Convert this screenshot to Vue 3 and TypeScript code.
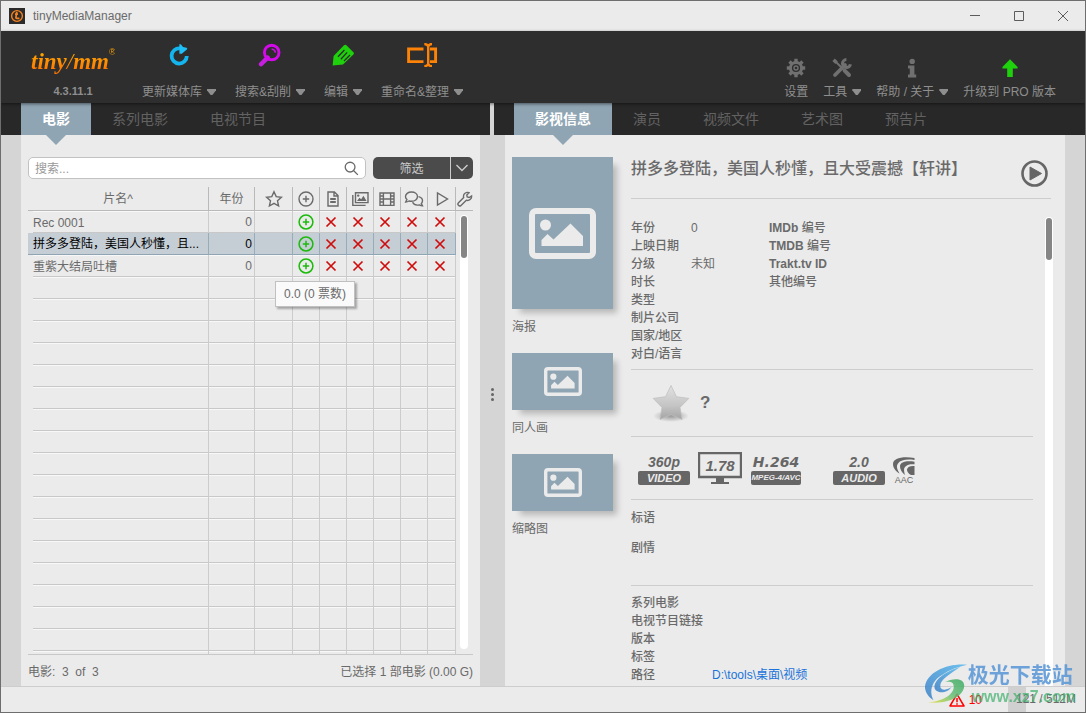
<script setup lang="ts">
import { ref } from 'vue'

interface Movie {
  title: string
  year: number
}

const movies: Movie[] = [
  { title: 'Rec 0001', year: 0 },
  { title: '拼多多登陆，美国人秒懂，且大受震撼【轩讲】', year: 0 },
  { title: '重紫大结局吐槽', year: 0 },
]
const selected = ref(1)
const query = ref('')
const emptyRows = 18
const flags = ['nfo', 'images', 'trailer', 'subtitles', 'watched']

const shorten = (title: string): string => (title.length > 14 ? title.slice(0, 13) + '...' : title)

const movieTabs = ['电影', '系列电影', '电视节目']
const detailTabs = ['影视信息', '演员', '视频文件', '艺术图', '预告片']
const movieTab = ref(0)
const detailTab = ref(0)

const artwork = [
  { label: '海报', kind: 'tall' },
  { label: '同人画', kind: 'wide' },
  { label: '缩略图', kind: 'wide' },
]

const facts = [
  { label: '年份', value: '0', latin: 'IMDb', id: ' 编号' },
  { label: '上映日期', value: '', latin: 'TMDB', id: ' 编号' },
  { label: '分级', value: '未知', latin: 'Trakt.tv ID', id: '' },
  { label: '时长', value: '', latin: '', id: '其他编号' },
  { label: '类型', value: '', latin: '', id: '' },
  { label: '制片公司', value: '', latin: '', id: '' },
  { label: '国家/地区', value: '', latin: '', id: '' },
  { label: '对白/语言', value: '', latin: '', id: '' },
]
const extras = ['系列电影', '电视节目链接', '版本', '标签']
</script>

<template>
  <div class="window">
    <header class="titlebar">
      <svg class="app-icon" viewBox="0 0 16 16">
        <rect width="16" height="16" fill="#2b2b2b" />
        <circle cx="8" cy="8" r="5.4" fill="none" stroke="#f5821f" stroke-width="1.4" />
        <path d="M7.8 3.8 6.900 9.600q0 .8.900.8h2.600M6 6.200h3" fill="none" stroke="#f5821f" stroke-width="1.700" />
      </svg>
      <span class="app-name">tinyMediaManager</span>
      <div class="window-buttons">
        <button aria-label="最小化"><svg viewBox="0 0 12 12"><path d="M1 5.5h10" /></svg></button>
        <button aria-label="最大化"><svg viewBox="0 0 12 12"><path d="M1.5 1.5h9v9h-9z" /></svg></button>
        <button aria-label="关闭"><svg viewBox="0 0 12 12"><path d="m1 1 10 10M11 1 1 11" /></svg></button>
      </div>
    </header>

    <div class="toolbar">
      <div class="brand">
        <div class="logo">tiny<i>/</i>mm<sup>®</sup></div>
        <div class="version">4.3.11.1</div>
      </div>
      <button class="tool">
        <svg class="icon24" viewBox="0 0 24 24">
          <path d="M19.8 13a7.600 7.600 0 1 1-6.800-7.600" fill="none" stroke="#14b4ee" stroke-width="3.800" />
          <path d="M12.400 1v9.800h2.400l5.600-4.800-.8-1.200-3.600-.8L14 1.400z" fill="#1fc0f8" />
        </svg>
        <span>更新媒体库<b class="caret"></b></span>
      </button>
      <button class="tool">
        <svg class="icon24" viewBox="0 0 24 24">
          <path d="M9.6 14.6 3 21.2" stroke="#c61fe0" stroke-width="4.4" stroke-linecap="round" />
          <circle cx="13.7" cy="9.5" r="7.3" fill="none" stroke="#d50aec" stroke-width="2.9" />
          <path d="M13.6 5.9q3.2.3 3.8 3.8" fill="none" stroke="#d50aec" stroke-width="1.5" />
        </svg>
        <span>搜索&amp;刮削<b class="caret"></b></span>
      </button>
      <button class="tool">
        <svg class="icon24" viewBox="0 0 24 24">
          <path d="M1.6 22.6 2.6 13 13 2.2q1.2-1 2.4 0l7 7q1 1.2 0 2.4L12 21.4z" fill="#1fd00c" />
          <path d="m13.400 7-6.400 6.800M16.200 9.400l-6.400 6.800M19 12l-6 6" fill="none" stroke="#2e2e2e" stroke-width="1.300" />
        </svg>
        <span>编辑<b class="caret"></b></span>
      </button>
      <button class="tool">
        <svg class="rename-icon" viewBox="0 0 32 24">
          <path d="M17.500 6H2.600v12.600h14.900M24 6h5.600v12.600H24" fill="none" stroke="#fd8208" stroke-width="2.900" />
          <path d="M18.300 1q3 0 3.900 2.400Q23.100 1 26 1M22.200 3v18M18.300 23.200q3 0 3.900-2.400.9 2.400 3.800 2.400" fill="none" stroke="#fd8208" stroke-width="2.400" />
        </svg>
        <span>重命名&amp;整理<b class="caret"></b></span>
      </button>

      <div class="toolbar-right">
        <button class="tool">
          <svg class="icon20" viewBox="0 0 20 20">
            <circle cx="10" cy="10" r="5.600" fill="none" stroke="#707070" stroke-width="3" />
            <path d="M10 .8v3.400M10 15.800v3.400M.8 10h3.400M15.800 10h3.400M3.500 3.500l2.400 2.400M14.100 14.100l2.400 2.400M16.500 3.500l-2.400 2.400M5.900 14.100l-2.400 2.400" stroke="#707070" stroke-width="3.400" />
            <circle cx="10" cy="10" r="2" fill="none" stroke="#707070" stroke-width="1.400" />
          </svg>
          <span>设置</span>
        </button>
        <button class="tool">
          <svg class="icon20" viewBox="0 0 20 20" fill="none" stroke="#707070">
            <path d="M3 17 13 7" stroke-width="3.800" stroke-linecap="round" />
            <path d="M14.400 1.600a4 4 0 1 0 4 4.600" stroke-width="3" />
            <path d="m3 3 8 8" stroke-width="2" />
            <path d="M1.600 1.800 4.600 4.800" stroke-width="3.400" />
            <path d="m12.600 12.600 4.400 4.400" stroke-width="4" stroke-linecap="round" />
          </svg>
          <span>工具<b class="caret"></b></span>
        </button>
        <button class="tool">
          <svg class="icon20" viewBox="0 0 20 20" fill="#707070">
            <circle cx="10.200" cy="3.400" r="2.700" />
            <path d="M6 7.600h6.400v9h1.800V19.400H6v-2.800h1.800v-6.200H6z" />
          </svg>
          <span>帮助 / 关于<b class="caret"></b></span>
        </button>
        <button class="tool">
          <svg class="icon20" viewBox="0 0 20 20"><path d="M10 1.200 17.600 9v1.400h-4.800V19H7.200v-8.600H2.400V9z" fill="#1fd00c" /></svg>
          <span>升级到 PRO 版本</span>
        </button>
      </div>
    </div>

    <main class="body">
      <section class="side side-left">
        <nav class="tabs">
          <button v-for="(tab, i) in movieTabs" :key="tab" :class="{ active: i === movieTab }" @click="movieTab = i">{{ tab }}</button>
        </nav>
        <div class="panel list-panel">
          <div class="filter-bar">
            <label class="search">
              <input v-model="query" type="text" placeholder="搜索..." aria-label="搜索" />
              <svg viewBox="0 0 16 16"><circle cx="6.500" cy="6.500" r="5.200" /><path d="m10.400 10.400 4.400 4.400" /></svg>
            </label>
            <div class="filter">
              <button class="filter-main">筛选</button>
              <button class="filter-more" aria-label="筛选选项"><svg viewBox="0 0 14 10"><path d="m1.500 2 5.500 5.500L12.500 2" /></svg></button>
            </div>
          </div>

          <div class="table-wrap">
            <table>
              <colgroup>
                <col /><col class="c-year" /><col class="c-star" />
                <col v-for="n in 5" :key="n" class="c-flag" />
                <col class="c-last" /><col class="c-tool" />
              </colgroup>
              <thead>
                <tr>
                  <th>片名^</th>
                  <th>年份</th>
                  <th><svg viewBox="0 0 18 18"><path d="m9 1.800 2.200 4.800 5.200.6-3.900 3.600 1.100 5.200L9 13.400 4.400 16l1.100-5.200L1.600 7.200l5.200-.6z" /></svg></th>
                  <th><svg viewBox="0 0 18 18"><circle cx="9" cy="9" r="7" /><path d="M9 5.800v6.400M5.800 9h6.400" /></svg></th>
                  <th><svg viewBox="0 0 18 18"><path d="M4 2h6.400L14 5.600V16H4zM10 2v4h4" /><path d="M6.200 9h5.600M6.200 12h5.600" stroke-width="2" /></svg></th>
                  <th><svg viewBox="0 0 18 18"><path d="M4.500 2.800H17v9.800H4.500z" /><path d="M1.800 5v10.400h12.800" /><path d="m6 11 2.400-3.200 1.800 1.400 2.200-3.400 3.200 5.200z" fill="#6a6a6a" stroke="none" /><circle cx="7.200" cy="5.600" r="1.200" fill="#6a6a6a" stroke="none" /></svg></th>
                  <th><svg viewBox="0 0 18 18"><path d="M2 3h14v12.400H2zM5.400 3v12.400M12.600 3v12.400M5.400 9h7.200M2 6h3.400M2 9h3.400M2 12h3.400M12.600 6H16M12.600 9H16M12.600 12H16" /></svg></th>
                  <th><svg class="talk" viewBox="0 0 20 18"><path d="M7.500 2C4 2 1.500 4 1.500 6.600c0 1.200.5 2.200 1.400 3L1.700 12c1.500 0 2.500-.5 3.300-1 .8.200 1.600.3 2.500.3 3.300 0 6-2 6-4.700S10.800 2 7.500 2z" /><path d="M14.500 6.600c2.500.5 4 2.200 4 4.200 0 1.100-.5 2-1.200 2.800l1.200 2.300c-1.400 0-2.400-.5-3.200-1-3 .6-5.600-.4-6.700-2.600" /></svg></th>
                  <th><svg viewBox="0 0 18 18"><path d="M4.500 3v12L14.500 9z" /></svg></th>
                  <th class="tool-head"><svg viewBox="0 0 16 16"><path d="M10 1.400a4 4 0 0 0-3.300 5.200L1.500 11.800a1.700 1.700 0 0 0 2.500 2.600L9.300 9.200A4 4 0 0 0 14.600 5l-2.400 1.500-2-.5-.4-2 2.200-2.300a4 4 0 0 0-2-.3z" /></svg></th>
                </tr>
              </thead>
              <tbody>
                <tr v-for="(m, i) in movies" :key="m.title" :class="{ selected: i === selected }" @click="selected = i">
                  <td class="name">{{ shorten(m.title) }}</td>
                  <td class="year">{{ m.year }}</td>
                  <td></td>
                  <td class="mark"><svg class="plus" viewBox="0 0 16 16"><circle cx="8" cy="8" r="6.900" /><path d="M8 4.800v6.400M4.800 8h6.400" /></svg></td>
                  <td v-for="f in flags" :key="f" class="mark missing"><svg class="cross" viewBox="0 0 12 12"><path d="m1.500 1.500 9 9M10.500 1.500l-9 9" /></svg></td>
                  <td class="tail"></td>
                </tr>
                <tr v-for="n in emptyRows" :key="'e' + n">
                  <td class="name"></td>
                  <td v-for="c in 8" :key="c"></td>
                  <td class="tail"></td>
                </tr>
              </tbody>
            </table>
            <div class="scrollbar"><div class="thumb"></div></div>
            <div class="tooltip">0.0 (0 票数)</div>
          </div>

          <footer class="summary">
            <span>电影:&nbsp; 3&nbsp; of&nbsp; 3</span>
            <span>已选择 1 部电影 (0.00 G)</span>
          </footer>
        </div>
      </section>

      <div class="splitter"><i></i><i></i><i></i></div>

      <section class="side side-right">
        <nav class="tabs">
          <button v-for="(tab, i) in detailTabs" :key="tab" :class="{ active: i === detailTab }" @click="detailTab = i">{{ tab }}</button>
        </nav>
        <div class="panel detail-panel">
          <div class="artwork">
            <figure v-for="a in artwork" :key="a.label" :class="a.kind">
              <div class="art">
                <svg viewBox="0 0 67 51">
                  <rect x="3" y="3" width="61" height="45" rx="4" fill="none" stroke="#ebebeb" stroke-width="6" />
                  <circle cx="16.500" cy="17" r="5.500" fill="#ebebeb" />
                  <path d="M12.500 38v-6l6-6 6 5.500L41.500 15.500 54 28v10z" fill="#ebebeb" />
                </svg>
              </div>
              <figcaption>{{ a.label }}</figcaption>
            </figure>
          </div>

          <div class="details">
            <div class="detail-head">
              <h1>拼多多登陆，美国人秒懂，且大受震撼【轩讲】</h1>
              <button class="play" aria-label="播放"><svg viewBox="0 0 27 27"><circle cx="13.500" cy="13.500" r="12" fill="none" stroke="#666" stroke-width="2.600" /><path d="M9 7v13l11.500-6.500z" fill="#666" stroke="#666" stroke-linejoin="round" /></svg></button>
            </div>
            <div class="scroll-area">
              <div class="sections">
                <dl class="facts">
                  <div v-for="f in facts" :key="f.label">
                    <dt>{{ f.label }}</dt>
                    <dd>{{ f.value }}</dd>
                    <dt><b>{{ f.latin }}</b>{{ f.id }}</dt>
                  </div>
                </dl>
                <div class="rating">
                  <svg viewBox="0 0 38 38">
                    <defs>
                      <linearGradient id="star" x1="0" y1="0" x2="0" y2="1"><stop offset="0" stop-color="#e2e2e2" /><stop offset=".6" stop-color="#c4c4c4" /><stop offset="1" stop-color="#a4a4a4" /></linearGradient>
                      <radialGradient id="ground"><stop offset="0" stop-color="#999" /><stop offset="1" stop-color="#999" stop-opacity="0" /></radialGradient>
                    </defs>
                    <ellipse cx="19" cy="32" rx="18" ry="6" fill="url(#ground)" />
                    <path d="m19 1.500 5.400 11.200 12.400 1.700-8.800 9 2 12L19 30.500 8 35.400l2-12-8.800-9 12.400-1.700z" fill="url(#star)" stroke="#bcbcbc" stroke-width=".7" stroke-linejoin="round" />
                  </svg>
                  <strong>?</strong>
                </div>
                <div class="badges">
                  <div class="badge"><em>360p</em><span>VIDEO</span></div>
                  <div class="monitor">
                    <em>1.78</em>
                    <svg viewBox="0 0 44 32"><path d="M1 1h42v24H1z" fill="none" stroke="#666" stroke-width="2.400" /><path d="M18 25h8v5h5v2H13v-2h5z" fill="#666" /></svg>
                  </div>
                  <div class="badge codec"><em>H.264</em><span>MPEG-4/AVC</span></div>
                  <div class="badge"><em>2.0</em><span>AUDIO</span></div>
                  <div class="aac">
                    <svg viewBox="0 0 22 18">
                      <path d="M21.500 1C9-1 0 1.500 0 7c0 4 3 7.500 6.500 9.500C4 12 3 9 5 6.500 8 2.500 14 2 21.500 3z" fill="#666" />
                      <path d="M21.500 4.800C13 3.500 7.500 5 7 9c-.2 3 1.800 6.500 5 9-1-4-1.600-6.500.5-8.500 2-2 5.200-2.500 9-2.200z" fill="#666" />
                      <path d="M21.500 9c-4-.3-7 .6-7.500 3.400-.2 2 1.500 4.200 4 5.600h3.500z" fill="#666" />
                    </svg>
                    <span>AAC</span>
                  </div>
                </div>
                <div class="texts">
                  <h2>标语</h2>
                  <h2>剧情</h2>
                </div>
                <dl class="extras">
                  <div v-for="e in extras" :key="e"><dt>{{ e }}</dt><dd></dd></div>
                  <div><dt>路径</dt><dd><a href="#">D:\tools\桌面\视频</a></dd></div>
                </dl>
              </div>
              <div class="scrollbar flat"><div class="thumb"></div></div>
            </div>
          </div>
        </div>
      </section>
    </main>

    <footer class="statusbar">
      <svg class="warn" viewBox="0 0 16 14"><path d="M8 1.200 15 13H1z" fill="none" stroke="#f00" stroke-width="1.500" stroke-linejoin="round" /><path d="M8 5v4.200M8 10.200v1.600" stroke="#f00" stroke-width="1.500" /></svg>
      <span class="warn-count">10</span>
      <div class="memory"><span>121 / 512M</span></div>
    </footer>

    <div class="watermark">
      <svg viewBox="0 0 46 42">
        <defs>
          <linearGradient id="wblue" x1="0" y1="1" x2="1" y2="0"><stop offset="0" stop-color="#3b7fc6" /><stop offset="1" stop-color="#55b8ee" /></linearGradient>
          <linearGradient id="wgreen" x1="0" y1="1" x2="1" y2="0"><stop offset="0" stop-color="#e8e03c" /><stop offset=".5" stop-color="#66c07a" /><stop offset="1" stop-color="#3aa860" /></linearGradient>
        </defs>
        <path d="M45 1C26-1 3 8 1 24c0 6 4 11 9 14C5 29 8 18 18 12 27 6 36 3 45 1z" fill="url(#wblue)" />
        <path d="M38 3C22 8 10 17 11 25c1 6 13 7 18-1-5 4-12 4-12-1 0-7 10-12 21-20z" fill="url(#wblue)" />
        <path d="M22 19c7-4 19-5 20 3 1 10-14 21-38 18 17-1 28-9 27-17 0-4-4-5-9-4z" fill="url(#wgreen)" />
      </svg>
      <div>
        <p class="mark-name">极光下载站</p>
        <p class="mark-url">www.xz7.com</p>
      </div>
    </div>
  </div>
</template>

<style>
body {
  margin: 0;
}
</style>

<style scoped>
* {
  box-sizing: border-box;
}
.window {
  position: relative;
  display: flex;
  flex-direction: column;
  height: 100vh;
  border: 1px solid #6e6e6e;
  background: #ebebeb;
  color: #6a6a6a;
  font: 12px/18px "Liberation Sans", "Noto Sans CJK SC", sans-serif;
  overflow: hidden;
}
button {
  border: 0;
  padding: 0;
  background: none;
  color: inherit;
  font: inherit;
}
svg {
  display: block;
}
h1, h2, p, dl, dd, figure {
  margin: 0;
}

.titlebar {
  display: flex;
  align-items: center;
  height: 30px;
  flex: none;
  padding: 0 8px;
}
.app-icon {
  width: 16px;
  height: 16px;
}
.app-name {
  margin-left: 8px;
}
.window-buttons {
  display: flex;
  gap: 32px;
  margin-left: auto;
  padding-right: 8px;
}
.window-buttons svg {
  width: 12px;
  height: 12px;
  fill: none;
  stroke: #5c5c5c;
}

.toolbar {
  position: relative;
  z-index: 2;
  display: flex;
  gap: 19px;
  height: 72px;
  flex: none;
  padding: 12px 29px 2px 30px;
  background: #2e2e2e;
  color: #8e8e8e;
  box-shadow: 0 1px 3px rgba(0, 0, 0, 0.5);
}
.brand {
  width: 84px;
  margin-right: 8px;
}
.logo {
  display: flex;
  height: 38px;
  align-items: center;
  font: italic bold 23px/38px "Liberation Serif", serif;
  color: transparent;
  background: linear-gradient(#ffa400 30%, #ff7800 70%);
  background-clip: text;
}
.logo i {
  font-weight: normal;
}
.logo sup {
  align-self: flex-start;
  font: 9px/18px "Liberation Sans", sans-serif;
}
.version {
  margin-top: 1px;
  font-size: 11px;
  font-weight: bold;
  text-align: center;
  line-height: 18px;
}
.tool {
  display: flex;
  flex-direction: column;
  align-items: center;
  justify-content: flex-end;
  gap: 3px;
  white-space: nowrap;
}
.tool > span {
  display: flex;
  align-items: center;
  gap: 5px;
  line-height: 18px;
}
.tool svg {
  margin: 0 auto;
}
.icon24 {
  width: 24px;
  height: 24px;
}
.rename-icon {
  width: 32px;
  height: 24px;
}
.toolbar > .tool {
  justify-content: space-between;
}
.icon20 {
  width: 20px;
  height: 20px;
}
.toolbar-right .tool {
  gap: 5px;
}
.caret {
  width: 9px;
  height: 6px;
  background: #8e8e8e;
  clip-path: polygon(0 0, 100% 0, 100% 20%, 60% 100%, 40% 100%, 0 20%);
}
.toolbar-right {
  display: flex;
  gap: 15px;
  margin-left: auto;
}

.body {
  display: flex;
  flex: 1;
  min-height: 0;
  background: #d5d5d5;
}
.side {
  display: flex;
  flex-direction: column;
  min-width: 0;
}
.side-left {
  flex: 489 1 0;
}
.side-right {
  flex: 591 1 0;
}
.tabs {
  display: flex;
  height: 32px;
  flex: none;
  padding-left: 20px;
  background: #282828;
  color: #626262;
  font-size: 14px;
}
.tabs button {
  position: relative;
  padding: 0 21px;
  white-space: nowrap;
}
.tabs .active {
  background: #8fa5b3;
  color: #fff;
  font-weight: bold;
}
.tabs .active::after {
  content: "";
  position: absolute;
  z-index: 1;
  top: 100%;
  left: 50%;
  margin-left: -10px;
  border: 10px solid transparent;
  border-top-color: #8fa5b3;
  border-bottom: 0;
}
.panel {
  flex: 1;
  min-height: 0;
  background: #ebebeb;
}
.splitter {
  display: flex;
  flex-direction: column;
  align-items: center;
  justify-content: center;
  gap: 2px;
  width: 4px;
  flex: none;
}
.splitter i {
  width: 3px;
  height: 3px;
  border-radius: 50%;
  background: #666;
}

.list-panel {
  display: flex;
  flex-direction: column;
  margin: 0 10px 0 20px;
  padding: 22px 7px 0;
}
.filter-bar {
  display: flex;
  gap: 7px;
  height: 22px;
}
.search {
  display: flex;
  align-items: center;
  flex: 1;
  min-width: 0;
  padding: 0 6px;
  border: 1px solid #c2c2c2;
  border-radius: 5px;
  background: #fff;
}
.search input {
  flex: 1;
  min-width: 0;
  padding: 1px 0 0;
  border: 0;
  outline: 0;
  background: none;
  color: #6a6a6a;
  font: inherit;
}
.search input::placeholder {
  color: #999;
}
.search svg {
  width: 15px;
  height: 15px;
}
.search svg,
.filter svg,
th svg {
  fill: none;
  stroke: #6a6a6a;
  stroke-width: 1.4;
}
.filter {
  display: flex;
  width: 100px;
  border-radius: 5px;
  background: #4b4b4b;
  color: #ccc;
}
.filter-main {
  flex: 1;
  padding-top: 1px;
}
.filter-more {
  width: 23px;
  border-left: 1px solid #ccc;
}
.filter svg {
  width: 14px;
  height: 10px;
  margin: 0 auto;
  stroke: #ccc;
}

.table-wrap {
  position: relative;
  flex: 1;
  min-height: 0;
  margin-top: 8px;
  clip-path: inset(0);
}
table {
  width: 100%;
  table-layout: fixed;
  border-collapse: separate;
  border-spacing: 0;
}
.c-year {
  width: 46px;
}
.c-star {
  width: 38px;
}
.c-flag {
  width: 27px;
}
.c-last {
  width: 28px;
}
.c-tool {
  width: 17px;
}
th {
  height: 24px;
  padding: 0;
  border-right: 1px solid #b9b9b9;
  border-bottom: 1px solid #b9b9b9;
  font-weight: normal;
  line-height: 22px;
}
th svg {
  width: 18px;
  height: 18px;
  margin: 0 auto;
}
th .talk {
  width: 20px;
}
th.tool-head {
  border-right: 0;
}
.tool-head svg {
  width: 16px;
  height: 16px;
}
td {
  height: 22px;
  padding: 0;
  border-right: 1px solid #ccc;
  border-bottom: 1px solid #c8c8c8;
  box-shadow: inset 0 1px #f8f8f8;
  line-height: 20px;
}
td.name {
  padding: 1px 2px 0 5px;
  border-bottom: 0;
  box-shadow: none;
  background:
    linear-gradient(#c8c8c8, #c8c8c8) 5px 100% / 100% 1px no-repeat,
    linear-gradient(#f8f8f8, #f8f8f8) 5px 0 / 100% 1px no-repeat;
  overflow: hidden;
  white-space: nowrap;
}
td.year {
  padding: 1px 2px 0 0;
  text-align: right;
}
td.tail {
  border: 0;
  box-shadow: none;
}
.selected td:not(.tail) {
  border-right-color: #98abb8;
  border-bottom: 1px solid #8fa5b3;
  background: #c5cdd5;
  box-shadow: none;
  color: #000;
}
.plus {
  width: 16px;
  height: 16px;
  margin: 0 auto;
  fill: none;
  stroke: #1cba0c;
  stroke-width: 1.5;
}
.missing {
  padding-right: 4px;
}
.cross {
  width: 12px;
  height: 12px;
  margin: 0 auto;
  fill: none;
  stroke: #d00d0d;
  stroke-width: 1.7;
}
.scrollbar {
  width: 8px;
  padding: 1px;
  border-radius: 4px;
  background: #fff;
}
.table-wrap .scrollbar {
  position: absolute;
  top: 28px;
  right: 5px;
  bottom: 5px;
}
.thumb {
  height: 42px;
  border-radius: 3px;
  background: #858585;
}
.tooltip {
  position: absolute;
  top: 94px;
  left: 247px;
  padding: 2px 8px;
  border: 1px solid #c0c0c0;
  background: #fafafa;
  box-shadow: 2px 2px 2px rgba(0, 0, 0, 0.3);
  line-height: 20px;
  white-space: nowrap;
}
.summary {
  display: flex;
  justify-content: space-between;
  align-items: center;
  height: 32px;
  padding-top: 2px;
  border-top: 1px solid #c8c8c8;
}

.detail-panel {
  display: flex;
  gap: 18px;
  margin: 0 20px 0 11px;
  padding: 22px 12px 0 7px;
}
.artwork {
  width: 101px;
  flex: none;
}
.art {
  display: flex;
  align-items: center;
  justify-content: center;
  height: 57px;
  background: #8fa5b3;
  box-shadow: 6px 6px 6px -2px rgba(0, 0, 0, 0.22);
}
.art svg {
  width: 38px;
  height: 29px;
}
.tall .art {
  height: 152px;
}
.tall .art svg {
  width: 67px;
  height: 51px;
}
figcaption {
  margin: 9px 0 17px;
}
.details {
  display: flex;
  flex-direction: column;
  flex: 1;
  min-width: 0;
  min-height: 0;
}
.detail-head {
  display: flex;
  justify-content: space-between;
  height: 42px;
  flex: none;
  margin-right: 2px;
  padding-right: 3px;
  border-bottom: 1px solid #cdcdcd;
}
h1 {
  font-size: 16px;
  line-height: 24px;
  font-weight: 500;
  white-space: nowrap;
}
.play {
  align-self: flex-start;
  padding-top: 3px;
}
.play svg {
  width: 27px;
  height: 27px;
}
.scroll-area {
  display: flex;
  gap: 12px;
  flex: 1;
  min-height: 0;
  margin-top: 18px;
}
.sections {
  flex: 1;
  min-width: 0;
  overflow: hidden;
}
.sections > :not(:last-child) {
  border-bottom: 1px solid #cdcdcd;
}
.scrollbar.flat {
  flex: none;
  border-radius: 4px 4px 0 0;
}
dt, h2 {
  font-weight: 500;
}
.facts {
  padding: 2px 0 6px;
}
.facts > div {
  display: grid;
  grid-template-columns: 60px 78px 1fr;
  height: 18px;
  white-space: nowrap;
}
.rating {
  display: flex;
  align-items: center;
  gap: 10px;
  height: 67px;
  padding-left: 21px;
}
.rating svg {
  width: 38px;
  height: 38px;
}
.rating strong {
  font-size: 17px;
}
.badges {
  display: flex;
  height: 63px;
  padding: 15px 0 0 7px;
  color: #666;
}
.badge {
  width: 52px;
  margin-right: 8px;
}
.badge em,
.badge span,
.monitor em {
  display: block;
  font-style: italic;
  font-weight: bold;
  text-align: center;
}
.badge em {
  height: 19px;
  font-size: 14px;
  line-height: 20px;
}
.badge span {
  height: 14px;
  border-radius: 2px;
  background: #666;
  color: #ebebeb;
  font-size: 11px;
  line-height: 14px;
}
.monitor {
  position: relative;
  width: 44px;
  margin-right: 9px;
}
.monitor svg {
  width: 44px;
  height: 32px;
}
.monitor em {
  position: absolute;
  inset: 0 0 auto 0;
  font-size: 15px;
  line-height: 27px;
}
.badge.codec {
  width: 50px;
  margin-right: 32px;
}
.codec em {
  font-family: "DejaVu Sans", sans-serif;
}
.codec span {
  font-size: 8px;
}
.aac {
  width: 22px;
  padding-top: 5px;
}
.aac svg {
  width: 22px;
  height: 18px;
  margin-bottom: 1px;
}
.aac span {
  display: block;
  font-size: 9px;
  line-height: 8px;
  text-align: center;
}
.texts {
  display: grid;
  gap: 12px;
  padding: 9px 0 28px;
}
h2 {
  font-size: 12px;
  line-height: 18px;
}
.extras {
  padding-top: 8px;
}
.extras > div {
  display: grid;
  grid-template-columns: 81px 1fr;
  height: 18px;
}
.extras dt {
  white-space: nowrap;
}
a {
  color: #1a73d9;
  text-decoration: none;
}

.statusbar {
  display: flex;
  align-items: center;
  justify-content: flex-end;
  height: 26px;
  flex: none;
  padding-right: 9px;
  border-top: 1px solid #cdcdcd;
}
.warn {
  width: 16px;
  height: 14px;
}
.warn-count {
  margin: 0 26px 0 4px;
  color: #f00;
}
.memory {
  width: 68px;
  align-self: stretch;
  background: linear-gradient(#d0d0d0, #d0d0d0) 0 0 / 18px 100% no-repeat;
  line-height: 25px;
  text-align: right;
}
.watermark {
  position: absolute;
  right: 9px;
  bottom: 5px;
  display: flex;
  opacity: 0.85;
  pointer-events: none;
  font-weight: bold;
}
.watermark svg {
  width: 44px;
  height: 42px;
}
.mark-name {
  color: #5796d6;
  font-size: 21px;
  line-height: 24px;
}
.mark-url {
  padding-left: 4px;
  color: #3aae68;
  font-size: 16px;
  line-height: 20px;
  opacity: 0.8;
}
</style>
